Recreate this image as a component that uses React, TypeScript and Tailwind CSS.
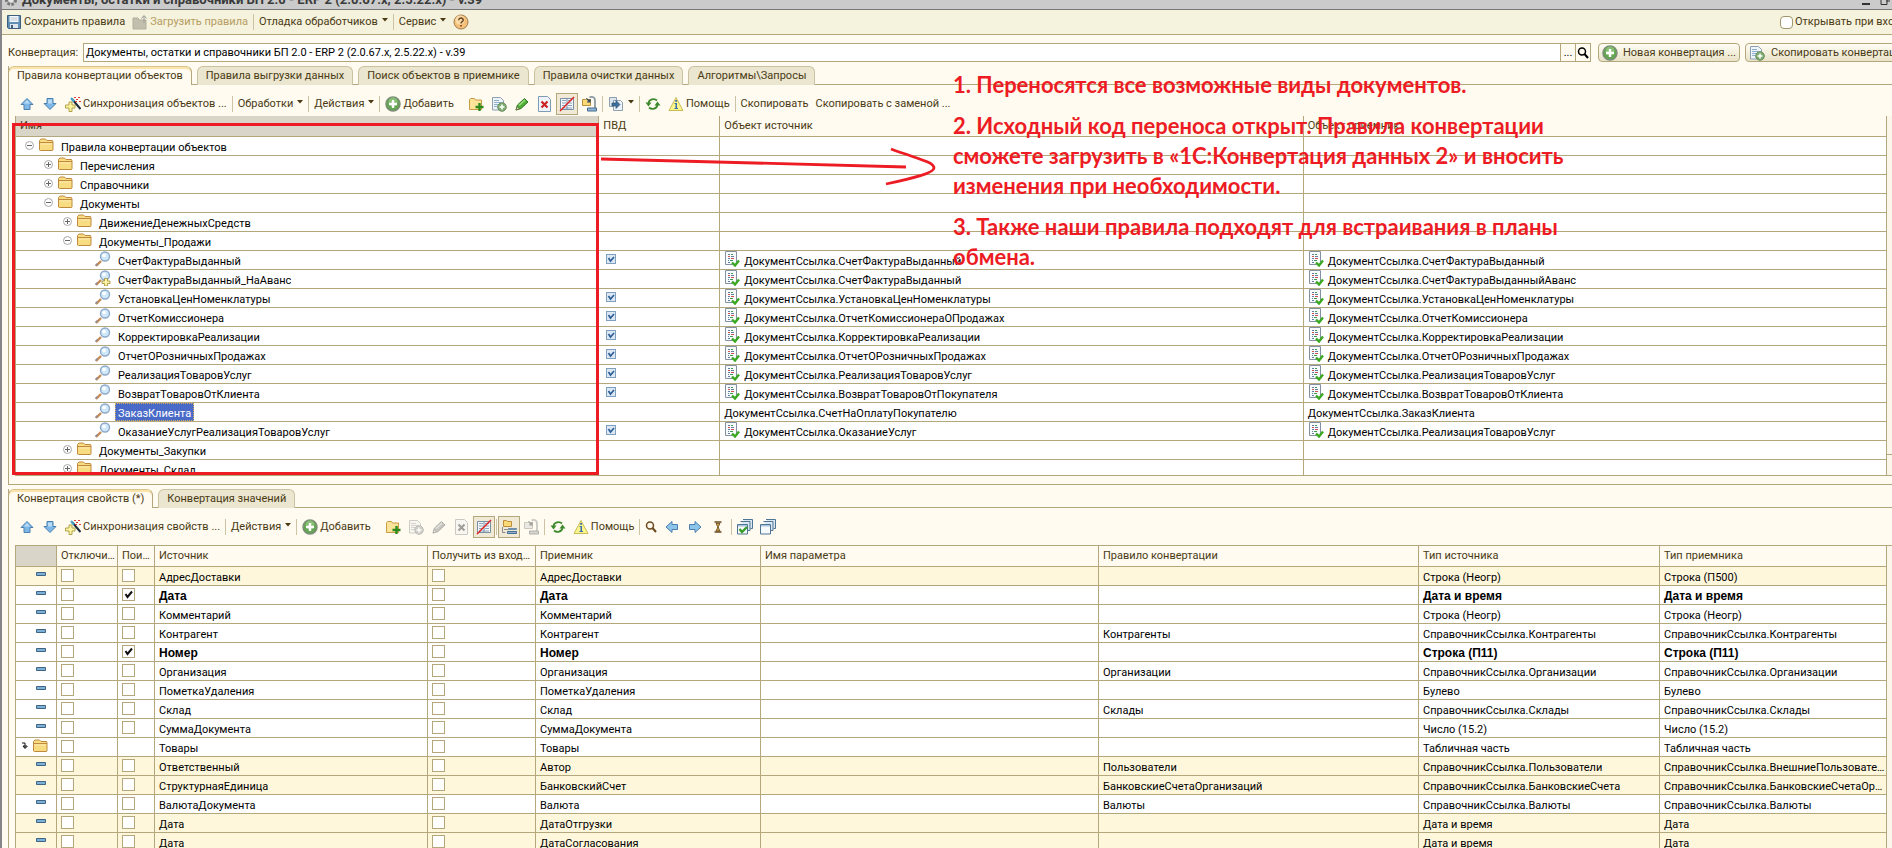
import type { ReactNode } from "react"
import clsx from "clsx"

/* ---------- Icons ---------- */

type IconProps = { children: ReactNode; faded?: boolean }

function Icon({ children, faded }: IconProps) {
	return (
		<svg
			width="16"
			height="16"
			viewBox="0 0 16 16"
			fill="none"
			aria-hidden="true"
			className={clsx("shrink-0", faded && "opacity-50 grayscale")}
		>
			{children}
		</svg>
	)
}

const SaveIcon = () => (
	<Icon>
		<path d="M1.500 1.500h13v13h-12l-1-1z" fill="#5f8fb5" stroke="#3f5f7c" />
		<path d="M3.500 2h9v6h-9z" fill="#f4f8fb" />
		<path d="M4.500 4h7M4.500 6h7" stroke="#b9c6d2" />
		<path d="M4 10h8v4H4z" fill="#dfe7ee" />
		<path d="M5 11h2v3H5z" fill="#3f5f7c" />
	</Icon>
)

const LoadIcon = () => (
	<Icon>
		<path d="M1 4h5l1 2h7v9H1z" fill="#c3bfae" stroke="#b3af9f" />
		<path d="M12 9V2M9.500 4.500L12 1.500l2.500 3" stroke="#9a9a98" />
	</Icon>
)

const HelpIcon = () => (
	<Icon>
		<circle cx="8" cy="8" r="7" fill="#f6c079" stroke="#a07a4c" />
		<circle cx="7" cy="6" r="4.500" fill="#fbdca9" />
		<path d="M5.800 6.200c0-3 4.600-2.800 4.400 0-.1 1.600-2.200 1.500-2.200 3.300" stroke="#6a4420" strokeWidth="1.500" />
		<path d="M7.200 11h1.600v1.600H7.200z" fill="#6a4420" />
	</Icon>
)

const UpIcon = () => (
	<Icon>
		<path d="M8 2.500l6 6h-3v5H5v-5H2z" fill="#7db8e8" stroke="#4a7fae" />
		<path d="M8 4l3 3.500H5z" fill="#b9dcf6" />
	</Icon>
)

const DownIcon = () => (
	<Icon>
		<path d="M8 13.500l6-6h-3v-5H5v5H2z" fill="#7db8e8" stroke="#4a7fae" />
		<path d="M6 3.500h4v4H6z" fill="#b9dcf6" />
	</Icon>
)

const LeftIcon = () => (
	<Icon>
		<path d="M2 8l6-5.500V5.500h5.500v5H8v3z" fill="#8cc4ea" stroke="#4a7fae" />
	</Icon>
)

const RightIcon = () => (
	<Icon>
		<path d="M14 8L8 2.500V5.500H2.500v5H8v3z" fill="#8cc4ea" stroke="#4a7fae" />
	</Icon>
)

const SyncIcon = () => (
	<Icon>
		<path d="M4 6h3v3h3v3H7v3.500H4V12H.5V9H4z" fill="#fbf3a0" stroke="#b0a24a" />
		<path d="M7 3l8.500 10" stroke="#1d2b38" strokeWidth="2" />
		<path d="M6 2l3 3.500" stroke="#3fa8c8" strokeWidth="2" />
		<path d="M9 1h2v1H9zM13 1h2v1h-2zM11 3h2v1h-2zM14 5h2v1h-2zM10 5h2v1h-2z" fill="#e03a3a" />
	</Icon>
)

const AddIcon = () => (
	<Icon>
		<circle cx="8" cy="8" r="7" fill="#63a552" stroke="#7d8c78" strokeWidth="1.500" />
		<circle cx="8" cy="6" r="4.500" fill="#86bf74" />
		<path d="M8 4v8M4 8h8" stroke="#fff" strokeWidth="2.400" />
	</Icon>
)

const FolderAddIcon = () => (
	<Icon>
		<path d="M1.500 13.500v-10l1-1h4l1 1.500h6v9.500z" fill="#fbe39a" stroke="#c99b45" />
		<path d="M11.500 7v8M7.500 11h8" stroke="#2f8a1e" strokeWidth="2.400" />
	</Icon>
)

const DocAddIcon = ({ faded }: { faded?: boolean }) => (
	<Icon faded={faded}>
		<path d="M1.500 1.500h8l3 3v9.500h-11z" fill="#eef4f9" stroke="#8da0b0" />
		<path d="M3 4.500h5M3 6.500h7M3 8.500h4M3 10.500h3" stroke="#8fb0ca" />
		<circle cx="11" cy="11" r="4.300" fill="#7eae6e" stroke="#6b8a62" />
		<path d="M11 8.500v5M8.500 11h5" stroke="#fff" strokeWidth="1.500" />
	</Icon>
)

const PencilIcon = ({ faded }: { faded?: boolean }) => (
	<Icon faded={faded}>
		<path d="M2 14l1.500-5 7-6.500 3.500 3.500-7 6.500z" fill="#4fae38" stroke="#2f7a22" />
		<path d="M5 9.500l6-5.500" stroke="#9be07f" strokeWidth="1.500" />
		<path d="M2 14l1-3.500 2.500 2.500z" fill="#f2d9b0" stroke="#4a5a3a" strokeWidth=".7" />
	</Icon>
)

const DeleteIcon = ({ faded }: { faded?: boolean }) => (
	<Icon faded={faded}>
		<path d="M1.500.5h9l3 3v12h-12z" fill="#eef4fa" stroke="#7f9bb5" />
		<path d="M4.500 5.500l6 6M10.500 5.500l-6 6" stroke="#cc2222" strokeWidth="2.200" />
	</Icon>
)

const MarkOffIcon = () => (
	<Icon>
		<path d="M1.500 2.500h13v11h-13z" fill="#f4f7fa" stroke="#7a8fa5" />
		<path d="M3 4.500h4M9 4.500h4M3 7h4M9 7h4M3 9.500h4M9 9.500h4M3 12h10" stroke="#8ea4ba" />
		<path d="M8 3v10" stroke="#7a8fa5" />
		<path d="M1 15L15 1" stroke="#e02020" strokeWidth="1.500" />
	</Icon>
)

const MoveIcon = ({ faded }: { faded?: boolean }) => (
	<Icon faded={faded}>
		<path d="M1.500 9.500v-6h3l1-1 1 1h3v6z" fill="#fbd976" stroke="#b98f3d" />
		<path d="M8.500 1.500c3-1.500 5.500 0 5.500 3V12" stroke="#8b99a5" strokeWidth="1.800" />
		<path d="M5.500 2.500l3.500 3.500M9 3v3H6" stroke="#33475a" strokeWidth="1.200" />
		<path d="M6.500 12h9v3h-9z" fill="#8fb6d8" stroke="#456b8e" />
	</Icon>
)

const DocArrowIcon = () => (
	<Icon>
		<path d="M1.500 1.500h7v9h-7z" fill="#dde6ee" stroke="#8da0b0" />
		<path d="M5.500 4.500h7l2 2v8h-9z" fill="#eef4f9" stroke="#8da0b0" />
		<path d="M4 7h4V4.500L12 8.500 8 12.500V10H4z" fill="#3c6f9c" stroke="#2b5275" strokeWidth=".7" />
	</Icon>
)

const RefreshIcon = () => (
	<Icon>
		<path d="M3.500 7a5 4.500 0 0 1 8.500-2.500M12.500 9a5 4.500 0 0 1-8.500 2.500" stroke="#3d8a2c" strokeWidth="1.700" />
		<path d="M.5 6.500h6L3.500 10.500zM15.500 9.500h-6L12.500 5.500z" fill="#3d8a2c" />
	</Icon>
)

const InfoIcon = () => (
	<Icon>
		<path d="M8 1.500L15 14.500H1z" fill="#fdf68c" stroke="#c9bd55" strokeLinejoin="round" />
		<path d="M7.200 4h1.800v1.800H7.200zM6.500 7h2.500v5h1v1H6.500v-1h1V8h-1z" fill="#3a6ea8" />
	</Icon>
)

const HierarchyIcon = () => (
	<Icon>
		<path d="M2.500 7.500v-6h3l1 1h4v5z" fill="#fbd976" stroke="#b98f3d" />
		<path d="M1.500 8v5.500h3M3 10.500h4" stroke="#8a8a8a" />
		<path d="M7.500 9.500h8v1h-8z" fill="#6f9cc4" stroke="#456b8e" strokeWidth=".6" />
		<path d="M6.500 12.500h9v2h-9z" fill="#8fb6d8" stroke="#456b8e" />
	</Icon>
)

const FindIcon = ({ className = "text-[#6b4a1e]" }: { className?: string }) => (
	<svg width="12" height="12" viewBox="0 0 12 12" fill="none" aria-hidden="true" className={className}>
		<circle cx="5" cy="4.500" r="3.500" stroke="currentColor" strokeWidth="1.500" />
		<path d="M7.500 7l3.500 4" stroke="currentColor" strokeWidth="2" />
	</svg>
)

const PeriodIcon = () => (
	<Icon>
		<path d="M4.500 3h7M4.500 13h7" stroke="#6b4a1e" strokeWidth="1.500" />
		<path d="M6 4.500h4l-1.500 3V9l1.500 3H6l1.500-3V7.500z" fill="#d9a441" stroke="#4a3413" strokeWidth=".7" />
	</Icon>
)

const StackIcon = ({ checked }: { checked?: boolean }) => (
	<Icon>
		<path d="M6 .5h9.500v9h-2M3.500 2.500H13v9h-2" fill="#dbe8f3" stroke="#4f7595" />
		<path d="M.5 5.500h10v9.500H.5z" fill="#f7fafc" stroke="#4f7595" />
		<path d="M1 6h9v1.500H1z" fill="#a9c6de" />
		{checked && <path d="M2.500 10l2.500 3 5-5" stroke="#3a9c28" strokeWidth="2.400" />}
	</Icon>
)

const FolderIcon = () => (
	<Icon>
		<path d="M1.500 13V3.500L3 2h4.500L9 3.500h5.500L15 5v8l-.5.5h-12z" fill="#f8dc82" stroke="#c08a3e" />
		<path d="M1.500 5.500H15" stroke="#c08a3e" />
		<path d="M2.500 7h11.500" stroke="#fceab0" />
	</Icon>
)

const LensIcon = ({ plus }: { plus?: boolean }) => (
	<Icon>
		<path d="M1 15l5-5" stroke="#c58b55" strokeWidth="2.400" />
		<path d="M.5 14.500l2-2" stroke="#8a8aa0" strokeWidth="1.500" />
		<circle cx="10" cy="5.500" r="4.500" fill="#cfe8fa" stroke="#8fa9c8" strokeWidth="1.400" />
		<circle cx="9" cy="4.500" r="1.800" fill="#fff" />
		{plus && <path d="M9.500 8.500h3v2.500h2.500v2.500h-2.500V16h-3v-2.500H7V11h2.500z" fill="#fbf3a0" stroke="#a08c3a" strokeWidth=".8" />}
	</Icon>
)

const RefIcon = () => (
	<Icon>
		<path d="M1.500.5h11v13h-11z" fill="#f8fafc" stroke="#8292a2" />
		<path d="M4 3.500h2M4 7.500h2M4 11.500h2" stroke="#5f7f9c" />
		<path d="M7 3.500h2M6 9.500h3" stroke="#3f9a55" />
		<path d="M4 5.500h2M7 7.500h3" stroke="#d05050" />
		<path d="M7 5.500h3M4 9.500h1" stroke="#5f7f9c" />
		<path d="M8 11.500l3 3 4-5" stroke="#3aa820" strokeWidth="2.400" />
	</Icon>
)

const ItemIcon = () => (
	<svg width="10" height="4" viewBox="0 0 10 4" aria-hidden="true">
		<path d="M.5.5h9v3h-9z" fill="#7db0d6" stroke="#3f6484" />
	</svg>
)

const TreeToggle = ({ open }: { open: boolean }) => (
	<svg width="9" height="9" viewBox="0 0 9 9" fill="none" aria-hidden="true" className="shrink-0">
		<circle cx="4.500" cy="4.500" r="4" fill="#fff" stroke="#a8a8a8" />
		<path d={open ? "M2 4.500h5" : "M2 4.500h5M4.500 2v5"} stroke="#666" />
	</svg>
)

/* ---------- Toolbar parts ---------- */

const Sep = () => <span className="-mx-0.5 h-4 w-px shrink-0 bg-[#cbc3a3]" />

const Caret = () => (
	<svg width="6" height="4" viewBox="0 0 6 4" aria-hidden="true" className="mb-1 ml-0.5 shrink-0">
		<path d="M0 0h6L3 3.500z" fill="#4a3a14" />
	</svg>
)

function ToolButton({
	icon,
	label,
	children,
	menu,
	pressed,
	disabled,
}: {
	icon?: ReactNode
	label?: string
	children?: ReactNode
	menu?: boolean
	pressed?: boolean
	disabled?: boolean
}) {
	return (
		<button
			type="button"
			aria-label={label}
			aria-pressed={pressed}
			disabled={disabled}
			className={clsx(
				"flex h-[22px] shrink-0 items-center gap-0.5 whitespace-nowrap",
				pressed && "-mx-1 border border-[#b4a77b] bg-[#efe9d6] px-0.5",
				disabled && "text-[#b59c62]"
			)}
		>
			{icon}
			{children && <span>{children}</span>}
			{menu && <Caret />}
		</button>
	)
}

function Tabs({ items, label }: { items: string[]; label: string }) {
	return (
		<div role="tablist" aria-label={label} className="flex h-[19px] gap-[5px] border-b border-[#b4a77b]">
			{items.map((item, i) => (
				<button
					key={item}
					type="button"
					role="tab"
					aria-selected={i === 0}
					className={clsx(
						"h-[19px] whitespace-nowrap rounded-t-md border border-b-0 px-2",
						i === 0
							? "-ml-px border-[#b4a77b] border-t-[#d9c48a] bg-[#fffbf0] shadow-[inset_0_2px_0_#fbe3ab]"
							: "h-[18px] border-[#c9c1a0] bg-[#ebe6cf]"
					)}
				>
					{item}
				</button>
			))}
		</div>
	)
}

/* ---------- Rules tree ---------- */

type Rule = {
	level: number
	name: string
	kind: "open" | "closed" | "lens" | "lensPlus"
	pvd?: boolean
	source?: string
	target?: string
	plain?: boolean
	selected?: boolean
}

const rules: Rule[] = [
	{ level: 0, name: "Правила конвертации объектов", kind: "open" },
	{ level: 1, name: "Перечисления", kind: "closed" },
	{ level: 1, name: "Справочники", kind: "closed" },
	{ level: 1, name: "Документы", kind: "open" },
	{ level: 2, name: "ДвижениеДенежныхСредств", kind: "closed" },
	{ level: 2, name: "Документы_Продажи", kind: "open" },
	{ level: 3, name: "СчетФактураВыданный", kind: "lens", pvd: true, source: "СчетФактураВыданный", target: "СчетФактураВыданный" },
	{ level: 3, name: "СчетФактураВыданный_НаАванс", kind: "lensPlus", source: "СчетФактураВыданный", target: "СчетФактураВыданныйАванс" },
	{ level: 3, name: "УстановкаЦенНоменклатуры", kind: "lens", pvd: true, source: "УстановкаЦенНоменклатуры", target: "УстановкаЦенНоменклатуры" },
	{ level: 3, name: "ОтчетКомиссионера", kind: "lens", pvd: true, source: "ОтчетКомиссионераОПродажах", target: "ОтчетКомиссионера" },
	{ level: 3, name: "КорректировкаРеализации", kind: "lens", pvd: true, source: "КорректировкаРеализации", target: "КорректировкаРеализации" },
	{ level: 3, name: "ОтчетОРозничныхПродажах", kind: "lens", pvd: true, source: "ОтчетОРозничныхПродажах", target: "ОтчетОРозничныхПродажах" },
	{ level: 3, name: "РеализацияТоваровУслуг", kind: "lens", pvd: true, source: "РеализацияТоваровУслуг", target: "РеализацияТоваровУслуг" },
	{ level: 3, name: "ВозвратТоваровОтКлиента", kind: "lens", pvd: true, source: "ВозвратТоваровОтПокупателя", target: "ВозвратТоваровОтКлиента" },
	{ level: 3, name: "ЗаказКлиента", kind: "lens", source: "СчетНаОплатуПокупателю", target: "ЗаказКлиента", plain: true, selected: true },
	{ level: 3, name: "ОказаниеУслугРеализацияТоваровУслуг", kind: "lens", pvd: true, source: "ОказаниеУслуг", target: "РеализацияТоваровУслуг" },
	{ level: 2, name: "Документы_Закупки", kind: "closed" },
	{ level: 2, name: "Документы_Склад", kind: "closed" },
]

const indents = ["pl-[9px]", "pl-[28px]", "pl-[47px]", "pl-[79px]"]

function RuleRef({ name, plain }: { name?: string; plain?: boolean }) {
	if (!name) return null
	return (
		<div className="flex h-[18px] items-start gap-1 pl-1">
			{!plain && <RefIcon />}
			<span className="pt-[3px] leading-[15px]">ДокументСсылка.{name}</span>
		</div>
	)
}

function RulesTable() {
	return (
		<div className="flex h-[360px] overflow-hidden border-b border-l border-[#b4a77b]">
			<table className="h-fit w-full table-fixed border-separate border-spacing-0">
				<colgroup>
					<col />
					<col className="w-[121px]" />
					<col />
					<col />
				</colgroup>
				<thead>
					<tr className="h-[21px] text-left text-[#4a3a14]">
						{["Имя", "ПВД", "Объект источник", "Объект приемник"].map((title, i) => (
							<th
								key={title}
								className={clsx(
									"border-b border-r border-[#b4a77b] py-0 pl-1 pr-0 font-normal leading-5",
									i === 0 && "bg-[#d9d5c9]"
								)}
							>
								{title}
							</th>
						))}
					</tr>
				</thead>
				<tbody className="bg-white text-black">
					{rules.map(rule => (
						<tr
							key={rule.name}
							className="h-[19px] [&>td]:border-b [&>td]:border-r [&>td]:border-[#b4a77b] [&>td]:p-0 [&>td]:align-top"
						>
							<td>
								<div className={clsx("flex h-[18px] items-start", indents[rule.level])}>
									{(rule.kind === "open" || rule.kind === "closed") && (
										<button
											type="button"
											aria-label={rule.kind === "open" ? "Свернуть" : "Развернуть"}
											className="mr-1 mt-1"
										>
											<TreeToggle open={rule.kind === "open"} />
										</button>
									)}
									{rule.kind.startsWith("lens") ? <LensIcon plus={rule.kind === "lensPlus"} /> : <FolderIcon />}
									<span
										className={clsx(
											"ml-1 h-[18px] border px-0.5 pt-0.5 leading-[15px]",
											rule.selected
												? "border-dotted border-[#d9b45a] bg-[#4a6ac8] text-white"
												: "border-transparent"
										)}
									>
										{rule.name}
									</span>
								</div>
							</td>
							<td>
								{rule.pvd && (
									<span className="ml-[7px] mt-[3px] grid size-[10px]">
										<input
											type="checkbox"
											defaultChecked
											aria-label={`ПВД ${rule.name}`}
											className="col-start-1 row-start-1 size-[10px] appearance-none border border-[#7f9fbf] bg-[#dbe8f4]"
										/>
										<svg viewBox="0 0 10 10" fill="none" aria-hidden="true" className="pointer-events-none col-start-1 row-start-1 size-[10px]">
											<path d="M2.500 4l2 3 3.500-4" stroke="#2f5f96" strokeWidth="1.700" />
										</svg>
									</span>
								)}
							</td>
							<td>
								<RuleRef name={rule.source} plain={rule.plain} />
							</td>
							<td>
								<RuleRef name={rule.target} plain={rule.plain} />
							</td>
						</tr>
					))}
				</tbody>
			</table>
			<div className="flex w-[5px] shrink-0 flex-col justify-end bg-[#faf7ea]">
				<div className="h-[21px] border-t border-[#b4a77b]" />
			</div>
		</div>
	)
}

/* ---------- Properties table ---------- */

type Property = {
	source: string
	target: string
	rule?: string
	sourceType: string
	targetType: string
	tinted?: boolean
	key?: boolean
	group?: boolean
}

const properties: Property[] = [
	{ source: "АдресДоставки", target: "АдресДоставки", sourceType: "Строка (Неогр)", targetType: "Строка (П500)", tinted: true },
	{ source: "Дата", target: "Дата", sourceType: "Дата и время", targetType: "Дата и время", key: true },
	{ source: "Комментарий", target: "Комментарий", sourceType: "Строка (Неогр)", targetType: "Строка (Неогр)" },
	{ source: "Контрагент", target: "Контрагент", rule: "Контрагенты", sourceType: "СправочникСсылка.Контрагенты", targetType: "СправочникСсылка.Контрагенты" },
	{ source: "Номер", target: "Номер", sourceType: "Строка (П11)", targetType: "Строка (П11)", key: true },
	{ source: "Организация", target: "Организация", rule: "Организации", sourceType: "СправочникСсылка.Организации", targetType: "СправочникСсылка.Организации" },
	{ source: "ПометкаУдаления", target: "ПометкаУдаления", sourceType: "Булево", targetType: "Булево" },
	{ source: "Склад", target: "Склад", rule: "Склады", sourceType: "СправочникСсылка.Склады", targetType: "СправочникСсылка.Склады" },
	{ source: "СуммаДокумента", target: "СуммаДокумента", sourceType: "Число (15.2)", targetType: "Число (15.2)" },
	{ source: "Товары", target: "Товары", sourceType: "Табличная часть", targetType: "Табличная часть", group: true },
	{ source: "Ответственный", target: "Автор", rule: "Пользователи", sourceType: "СправочникСсылка.Пользователи", targetType: "СправочникСсылка.ВнешниеПользователи", tinted: true },
	{ source: "СтруктурнаяЕдиница", target: "БанковскийСчет", rule: "БанковскиеСчетаОрганизаций", sourceType: "СправочникСсылка.БанковскиеСчета", targetType: "СправочникСсылка.БанковскиеСчетаОрганизаций", tinted: true },
	{ source: "ВалютаДокумента", target: "Валюта", rule: "Валюты", sourceType: "СправочникСсылка.Валюты", targetType: "СправочникСсылка.Валюты" },
	{ source: "Дата", target: "ДатаОтгрузки", sourceType: "Дата и время", targetType: "Дата", tinted: true },
	{ source: "Дата", target: "ДатаСогласования", sourceType: "Дата и время", targetType: "Дата", tinted: true },
]

const propertyHeads = [
	"",
	"Отключить",
	"Поиск",
	"Источник",
	"Получить из входящих",
	"Приемник",
	"Имя параметра",
	"Правило конвертации",
	"Тип источника",
	"Тип приемника",
]

function CellCheck({ label, checked = false }: { label: string; checked?: boolean }) {
	return (
		<span className="ml-1 mt-0.5 grid size-[13px]">
			<input
				type="checkbox"
				defaultChecked={checked}
				aria-label={label}
				className="peer col-start-1 row-start-1 size-[13px] appearance-none border border-[#b4a77b] bg-white"
			/>
			<svg
				viewBox="0 0 13 13"
				fill="none"
				aria-hidden="true"
				className="pointer-events-none invisible col-start-1 row-start-1 size-[13px] peer-checked:visible"
			>
				<path d="M3.500 6l2 3 4.500-5.500" stroke="#111" strokeWidth="2" />
			</svg>
		</span>
	)
}

function CellText({ children }: { children?: ReactNode }) {
	return <div className="truncate pl-1 pt-[3px] leading-[15px]">{children}</div>
}

function PropertiesTable() {
	return (
		<div className="flex border-l border-t border-[#b4a77b]">
			<table className="h-fit w-full table-fixed border-separate border-spacing-0">
				<colgroup>
					<col className="w-[41px]" />
					<col className="w-[61px]" />
					<col className="w-[37px]" />
					<col className="w-[273px]" />
					<col className="w-[108px]" />
					<col className="w-[225px]" />
					<col className="w-[338px]" />
					<col className="w-[320px]" />
					<col className="w-[241px]" />
					<col />
				</colgroup>
				<thead>
					<tr className="h-[21px] text-left text-[#4a3a14]">
						{propertyHeads.map((title, i) => (
							<th
								key={i}
								className={clsx(
									"truncate border-b border-r border-[#b4a77b] py-0 pl-1 pr-0 font-normal leading-5",
									i === 0 && "bg-[#d9d5c9]"
								)}
							>
								{title}
							</th>
						))}
					</tr>
				</thead>
				<tbody className="text-black">
					{properties.map((row, i) => (
						<tr
							key={i}
							className={clsx(
								"h-[19px] [&>td]:truncate [&>td]:border-b [&>td]:border-r [&>td]:border-[#b4a77b] [&>td]:p-0 [&>td]:align-top",
								row.tinted ? "bg-[#fff7dc]" : "bg-white",
								row.key && "font-['Liberation_Sans',sans-serif] text-[12px] font-bold"
							)}
						>
							<td>
								<div className="flex h-[18px] items-start justify-end">
									{row.group ? (
										<span className="flex gap-1 pr-2">
											<svg width="6" height="8" viewBox="0 0 6 8" fill="none" aria-hidden="true" className="mt-1">
												<path d="M0 1h3v5M1 4l2 2.500L5.500 4M1 4h4" stroke="#111" />
											</svg>
											<FolderIcon />
										</span>
									) : (
										<span className="pr-[10px] pt-[5px]">
											<ItemIcon />
										</span>
									)}
								</div>
							</td>
							<td>
								<CellCheck label={`Отключить ${row.target}`} />
							</td>
							<td>{!row.group && <CellCheck label={`Поиск ${row.target}`} checked={row.key} />}</td>
							<td>
								<CellText>{row.source}</CellText>
							</td>
							<td>
								<CellCheck label={`Получить ${row.target}`} />
							</td>
							<td>
								<CellText>{row.target}</CellText>
							</td>
							<td />
							<td>
								<CellText>{row.rule}</CellText>
							</td>
							<td>
								<CellText>{row.sourceType}</CellText>
							</td>
							<td>
								<CellText>{row.targetType}</CellText>
							</td>
						</tr>
					))}
				</tbody>
			</table>
			<div className="w-[5px] shrink-0 bg-[#faf7ea]" />
		</div>
	)
}

/* ---------- Red notes drawn over the rules tree ---------- */

function Notes() {
	return (
		<div className="pointer-events-none absolute inset-0 text-[#ed1c24]">
			<div className="absolute left-[3px] top-[57px] h-[352px] w-[587px] border-[3px] border-[#ed1c24]" />
			<svg width="340" height="40" viewBox="0 0 340 40" fill="none" aria-hidden="true" className="absolute left-[592px] top-[81px]">
				<path d="M0 12l305 8M290 2c30 11 43 13 43 19 0 5-20 10-48 16" stroke="#ed1c24" strokeWidth="2.800" />
			</svg>
			<div className="absolute left-[944px] top-1 w-[640px] space-y-[11px] font-['Lato','Noto_Sans',sans-serif] text-[22px] font-bold leading-[30px]">
				<p>1. Переносятся все возможные виды документов.</p>
				<p>
					2. Исходный код переноса открыт. Правила конвертации
					<br />
					сможете загрузить в «1С:Конвертация данных 2» и вносить
					<br />
					изменения при необходимости.
				</p>
				<p>
					3. Также наши правила подходят для встраивания в планы
					<br />
					обмена.
				</p>
			</div>
		</div>
	)
}

export default function App() {
	return (
		<div className="flex h-screen flex-col overflow-hidden border-l-2 border-[#85858a] bg-[#fffbf0] font-['Roboto','Liberation_Sans',sans-serif] text-[11px] leading-4 text-[#4a3a14]">
			{/* Title bar */}
			<header className="flex h-[10px] shrink-0 items-end justify-between overflow-hidden border-b border-[#77777a] bg-[#cbcbcb] px-0.5 text-[#3a3a3a]">
				<h1 className="flex h-[18px] items-center gap-1 whitespace-nowrap text-[13px] font-bold leading-[18px]">
					<svg width="14" height="14" viewBox="0 0 14 14" aria-hidden="true">
						<circle cx="7" cy="7" r="4.500" fill="#b5b5b5" stroke="#777" strokeWidth="3" strokeDasharray="2.500 1.500" />
						<circle cx="7" cy="7" r="2.500" fill="#e5e5e5" />
					</svg>
					Документы, остатки и справочники БП 2.0 - ERP 2 (2.0.67.x, 2.5.22.x) - v.39
				</h1>
				<svg width="32" height="9" viewBox="0 0 32 9" fill="none" aria-hidden="true">
					<path d="M4 4h8" stroke="#333" strokeWidth="2" />
					<path d="M23 0v4.500h6V0M28 1h4" stroke="#333" />
				</svg>
			</header>

			{/* Main toolbar */}
			<div className="flex h-[25px] shrink-0 items-center justify-between border-b border-[#b4a77b] bg-[#f5f2dd] pl-1">
				<div className="flex items-center gap-[7px]">
					<ToolButton icon={<SaveIcon />}>Сохранить правила</ToolButton>
					<ToolButton icon={<LoadIcon />} disabled>Загрузить правила</ToolButton>
					<Sep />
					<ToolButton menu>Отладка обработчиков</ToolButton>
					<Sep />
					<ToolButton menu>Сервис</ToolButton>
					<ToolButton icon={<HelpIcon />} label="Справка" />
				</div>
				<label className="flex w-[112px] items-center gap-0.5 overflow-hidden whitespace-nowrap">
					<input type="checkbox" className="size-[13px] shrink-0 appearance-none rounded-sm border border-[#a2966a] bg-white" />
					Открывать при входе
				</label>
			</div>

			{/* Conversion picker */}
			<div className="flex shrink-0 items-center gap-[7px] overflow-hidden pb-1 pl-1.5 pt-2">
				<label htmlFor="conversion" className="w-[68px] shrink-0">Конвертация:</label>
				<div className="flex h-[19px] flex-1 border border-[#b4a77b] bg-white">
					<input
						id="conversion"
						type="text"
						defaultValue="Документы, остатки и справочники БП 2.0 - ERP 2 (2.0.67.x, 2.5.22.x) - v.39"
						className="min-w-0 flex-1 px-0.5 text-black"
					/>
					<button type="button" aria-label="Выбрать" className="w-[15px] border-l border-[#b4a77b] bg-[#fffbf0] leading-none text-black">
						...
					</button>
					<button type="button" aria-label="Открыть" className="flex w-[15px] items-center justify-center border-l border-[#b4a77b] bg-[#fffbf0]">
						<FindIcon className="text-black" />
					</button>
				</div>
				<div className="flex w-[294px] shrink-0 gap-[5px] overflow-hidden whitespace-nowrap">
					<button type="button" className="flex h-[19px] w-[142px] shrink-0 items-center justify-between rounded border border-[#b4a77b] bg-linear-to-b from-[#fffdf4] to-[#e9e3c8] px-[3px]">
						<AddIcon />
						Новая конвертация ...
					</button>
					<button type="button" className="flex h-[19px] shrink-0 items-center gap-1.5 rounded border border-[#b4a77b] bg-linear-to-b from-[#fffdf4] to-[#e9e3c8] px-[3px]">
						<DocAddIcon />
						Скопировать конвертацию
					</button>
				</div>
			</div>

			{/* Object rules */}
			<section className="relative ml-1.5 shrink-0 border-b border-l border-[#b4a77b] pb-2">
				<Tabs
					label="Правила"
					items={[
						"Правила конвертации объектов",
						"Правила выгрузки данных",
						"Поиск объектов в приемнике",
						"Правила очистки данных",
						"Алгоритмы\\Запросы",
					]}
				/>
				<div className="flex h-[31px] items-center gap-[7px] pl-[10px] pt-1.5">
					<ToolButton icon={<UpIcon />} label="Вверх" />
					<ToolButton icon={<DownIcon />} label="Вниз" />
					<ToolButton icon={<SyncIcon />}>Синхронизация объектов ...</ToolButton>
					<Sep />
					<ToolButton menu>Обработки</ToolButton>
					<Sep />
					<ToolButton menu>Действия</ToolButton>
					<Sep />
					<ToolButton icon={<AddIcon />}><u>Д</u>обавить</ToolButton>
					<span />
					<ToolButton icon={<FolderAddIcon />} label="Добавить группу" />
					<ToolButton icon={<DocAddIcon />} label="Скопировать строку" />
					<ToolButton icon={<PencilIcon />} label="Изменить" />
					<ToolButton icon={<DeleteIcon />} label="Удалить" />
					<ToolButton icon={<MarkOffIcon />} label="Отключить" pressed />
					<ToolButton icon={<MoveIcon />} label="Переместить" />
					<Sep />
					<ToolButton icon={<DocArrowIcon />} label="Перейти" menu />
					<Sep />
					<ToolButton icon={<RefreshIcon />} label="Обновить" />
					<ToolButton icon={<InfoIcon />}>Помощь</ToolButton>
					<Sep />
					<ToolButton>Скопировать</ToolButton>
					<ToolButton>Скопировать с заменой ...</ToolButton>
				</div>
				<div className="pl-1.5">
					<RulesTable />
				</div>
				<Notes />
			</section>

			{/* Property rules */}
			<section className="ml-1.5 mt-1 flex-1 border-l border-[#b4a77b]">
				<Tabs label="Свойства" items={["Конвертация свойств (*)", "Конвертация значений"]} />
				<div className="flex h-[37px] items-center gap-[7px] pl-[10px]">
					<ToolButton icon={<UpIcon />} label="Вверх" />
					<ToolButton icon={<DownIcon />} label="Вниз" />
					<ToolButton icon={<SyncIcon />}>Синхронизация свойств ...</ToolButton>
					<Sep />
					<ToolButton menu>Действия</ToolButton>
					<Sep />
					<ToolButton icon={<AddIcon />}><u>Д</u>обавить</ToolButton>
					<span />
					<ToolButton icon={<FolderAddIcon />} label="Добавить группу" />
					<ToolButton icon={<DocAddIcon faded />} label="Скопировать строку" disabled />
					<ToolButton icon={<PencilIcon faded />} label="Изменить" disabled />
					<ToolButton icon={<DeleteIcon faded />} label="Удалить" disabled />
					<ToolButton icon={<MarkOffIcon />} label="Отключить" pressed />
					<Sep />
					<ToolButton icon={<HierarchyIcon />} label="Иерархия" pressed />
					<ToolButton icon={<MoveIcon faded />} label="Переместить" disabled />
					<Sep />
					<ToolButton icon={<RefreshIcon />} label="Обновить" />
					<ToolButton icon={<InfoIcon />}>Помощь</ToolButton>
					<Sep />
					<ToolButton icon={<FindIcon />} label="Найти" />
					<ToolButton icon={<LeftIcon />} label="Назад" />
					<ToolButton icon={<RightIcon />} label="Вперед" />
					<ToolButton icon={<PeriodIcon />} label="Период" />
					<Sep />
					<ToolButton icon={<StackIcon checked />} label="Установить флажки" />
					<ToolButton icon={<StackIcon />} label="Снять флажки" />
				</div>
				<div className="pl-1.5">
					<PropertiesTable />
				</div>
			</section>
		</div>
	)
}
